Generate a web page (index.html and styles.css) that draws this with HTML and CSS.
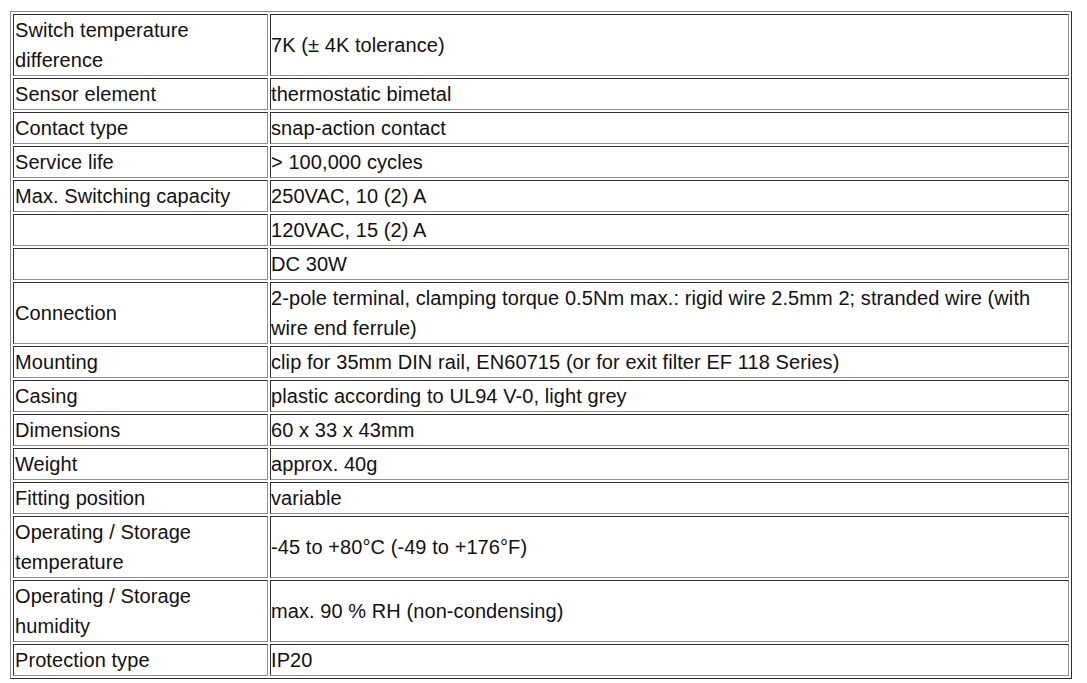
FILE: index.html
```html
<!DOCTYPE html>
<html>
<head>
<meta charset="utf-8">
<link rel="stylesheet" href="styles.css">
</head>
<body>
<div class="page">
<table class="spec">
<colgroup><col class="c1"><col class="c2"></colgroup>
<tbody>
<tr><td>Switch temperature difference</td><td>7K (± 4K tolerance)</td></tr>
<tr><td>Sensor element</td><td>thermostatic bimetal</td></tr>
<tr><td>Contact type</td><td>snap-action contact</td></tr>
<tr><td>Service life</td><td>&gt; 100,000 cycles</td></tr>
<tr><td>Max. Switching capacity</td><td>250VAC, 10 (2) A</td></tr>
<tr><td></td><td>120VAC, 15 (2) A</td></tr>
<tr><td></td><td>DC 30W</td></tr>
<tr><td>Connection</td><td>2-pole terminal, clamping torque 0.5Nm max.: rigid wire 2.5mm 2; stranded wire (with wire end ferrule)</td></tr>
<tr><td>Mounting</td><td>clip for 35mm DIN rail, EN60715 (or for exit filter EF 118 Series)</td></tr>
<tr><td>Casing</td><td>plastic according to UL94 V-0, light grey</td></tr>
<tr><td>Dimensions</td><td>60 x 33 x 43mm</td></tr>
<tr><td>Weight</td><td>approx. 40g</td></tr>
<tr><td>Fitting position</td><td>variable</td></tr>
<tr><td>Operating / Storage temperature</td><td>-45 to +80°C (-49 to +176°F)</td></tr>
<tr><td>Operating / Storage humidity</td><td>max. 90 % RH (non-condensing)</td></tr>
<tr><td>Protection type</td><td>IP20</td></tr>
</tbody>
</table>
</div>
</body>
</html>
```
FILE: styles.css
```css
html, body {
  margin: 0;
  padding: 0;
  background: #ffffff;
}
.page {
  padding: 11px 0 0 10px;
}
.spec {
  width: 1062px;
  table-layout: fixed;
  border-collapse: separate;
  border-spacing: 2px;
  border-style: solid;
  border-width: 1px;
  border-color: #8a8a8a #2e2e2e #2e2e2e #8a8a8a;
  font-family: "Liberation Sans", Arial, sans-serif;
  font-size: 20px;
  line-height: 30px;
  letter-spacing: 0.08px;
  color: #111111;
}
.c1 { width: 255px; }
.c2 { width: 799px; }
.spec td {
  padding: 0 1px 0 0;
  border-style: solid;
  border-width: 1px;
  border-color: #2e2e2e #8f8f8f #8f8f8f #2e2e2e;
  vertical-align: middle;
  height: 30px;
}
.spec td:first-child {
  padding-left: 1px;
}
```
